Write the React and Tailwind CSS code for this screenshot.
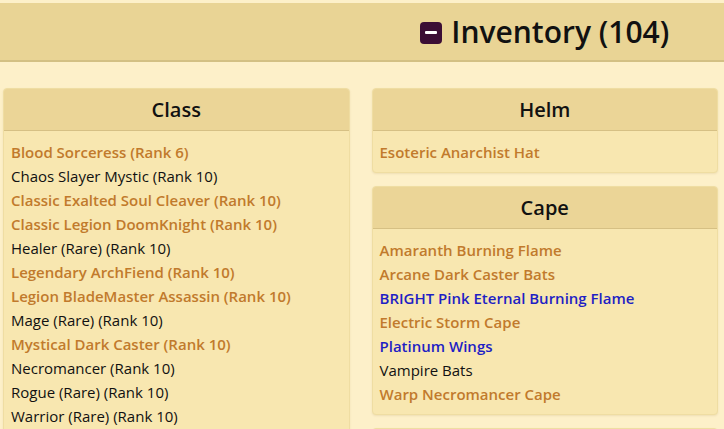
import React from "react";

const classItems = [
  { name: "Blood Sorceress (Rank 6)", tone: "gold" },
  { name: "Chaos Slayer Mystic (Rank 10)", tone: "plain" },
  { name: "Classic Exalted Soul Cleaver (Rank 10)", tone: "gold" },
  { name: "Classic Legion DoomKnight (Rank 10)", tone: "gold" },
  { name: "Healer (Rare) (Rank 10)", tone: "plain" },
  { name: "Legendary ArchFiend (Rank 10)", tone: "gold" },
  { name: "Legion BladeMaster Assassin (Rank 10)", tone: "gold" },
  { name: "Mage (Rare) (Rank 10)", tone: "plain" },
  { name: "Mystical Dark Caster (Rank 10)", tone: "gold" },
  { name: "Necromancer (Rank 10)", tone: "plain" },
  { name: "Rogue (Rare) (Rank 10)", tone: "plain" },
  { name: "Warrior (Rare) (Rank 10)", tone: "plain" },
];

const helmItems = [{ name: "Esoteric Anarchist Hat", tone: "gold" }];

const capeItems = [
  { name: "Amaranth Burning Flame", tone: "gold" },
  { name: "Arcane Dark Caster Bats", tone: "gold" },
  { name: "BRIGHT Pink Eternal Burning Flame", tone: "blue" },
  { name: "Electric Storm Cape", tone: "gold" },
  { name: "Platinum Wings", tone: "blue" },
  { name: "Vampire Bats", tone: "plain" },
  { name: "Warp Necromancer Cape", tone: "gold" },
];

const toneClass = {
  gold: "text-[#c17a2c] font-semibold",
  blue: "text-[#1f1fc4] font-semibold",
  plain: "text-[#111]",
};

const Panel = ({ title, items }) => (
  <div className="rounded-[4px] border border-[#efdda2] bg-[#f8e7b0] shadow-[0_1px_2px_rgba(160,130,60,0.15)] overflow-hidden">
    <div className="h-[42px] flex items-center justify-center bg-[#ebd597] border-b border-[#d6c084] text-[20px] font-semibold text-[#111]">
      {title}
    </div>
    <ul className="px-[7px] pt-[9px] pb-[8px]">
      {items.map((item, index) => (
        <li key={index} className={`h-[24px] leading-[24px] text-[15px] ${toneClass[item.tone]}`}>
          {item.name}
        </li>
      ))}
    </ul>
  </div>
);

const App = () => {
  return (
    <div
      className="min-h-screen bg-[#fdf0c9] pt-[3px]"
      style={{ fontFamily: '"Open Sans", "Noto Sans", sans-serif' }}
    >
      {/* Header */}
      <div className="h-[59px] bg-[#e9d495] border-b-2 border-[#d3c084] grid grid-cols-2 gap-[22px] px-[3px] pr-[6px]">
        <div />
        <div className="flex items-center justify-center gap-[9px]">
          <span className="w-[22px] h-[22px] rounded-[4px] bg-[#3b0e35] flex items-center justify-center mt-[2px]">
            <span className="w-[12px] h-[3px] bg-white rounded-[1px]" />
          </span>
          <span className="text-[30px] font-semibold text-[#111] leading-none">Inventory (104)</span>
        </div>
      </div>

      {/* Columns */}
      <div className="grid grid-cols-2 gap-[22px] pl-[3px] pr-[6px] pt-[26px]">
        <div className="flex flex-col gap-[13px]">
          <Panel title="Class" items={classItems} />
        </div>
        <div className="flex flex-col gap-[13px]">
          <Panel title="Helm" items={helmItems} />
          <Panel title="Cape" items={capeItems} />
          <Panel title="" items={[]} />
        </div>
      </div>
    </div>
  );
};

export default App;
